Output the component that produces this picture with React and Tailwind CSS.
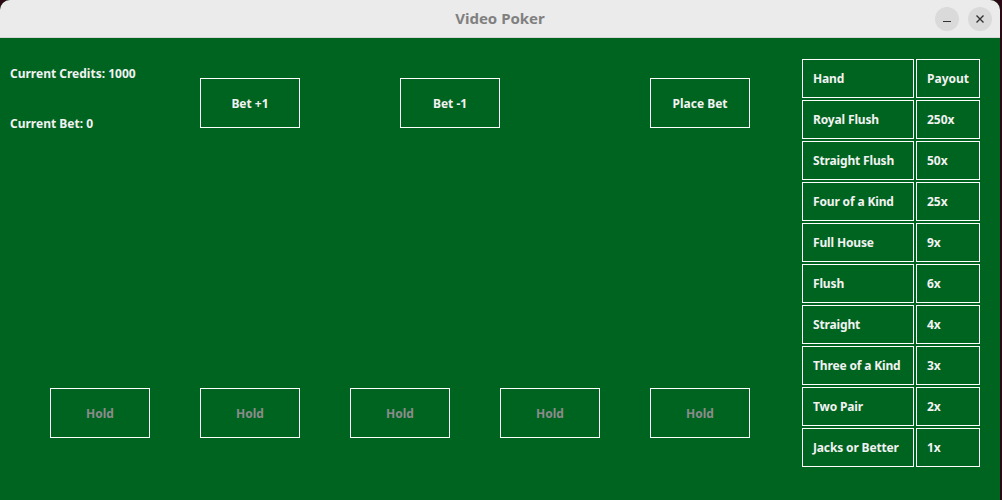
import React from "react";

const PAYOUTS = [
  ["Hand", "Payout"],
  ["Royal Flush", "250x"],
  ["Straight Flush", "50x"],
  ["Four of a Kind", "25x"],
  ["Full House", "9x"],
  ["Flush", "6x"],
  ["Straight", "4x"],
  ["Three of a Kind", "3x"],
  ["Two Pair", "2x"],
  ["Jacks or Better", "1x"],
];

const font = { fontFamily: "'Noto Sans', 'Open Sans', sans-serif" };

const Btn = ({ children, className = "", dim }) => (
  <div
    className={
      "flex h-[50px] w-[100px] shrink-0 items-center justify-center border border-white pt-[2px] text-[12px] font-bold " +
      (dim ? "text-[#8c8c8c] " : "text-[#f2f2f2] ") +
      className
    }
  >
    {children}
  </div>
);

export default function App() {
  return (
    <div className="flex h-[500px] w-[1002px] bg-[#2b0a16]" style={font}>
      <div className="flex w-[1000px] flex-col overflow-hidden rounded-t-[10px] bg-[#006421]">
        {/* title bar */}
        <div className="relative flex h-[38px] shrink-0 items-center justify-center border-b border-[#d6d6d6] bg-[#ebebeb]">
          <span className="text-[15px] font-bold text-[#808080]">Video Poker</span>
          <div className="absolute right-[8px] top-[7px] flex gap-[9px]">
            <div className="flex h-[24px] w-[24px] items-center justify-center rounded-full bg-[#dadada]">
              <div className="mt-[5px] h-[1.5px] w-[8px] bg-[#333]" />
            </div>
            <div className="flex h-[24px] w-[24px] items-center justify-center rounded-full bg-[#dadada]">
              <svg width="10" height="10" viewBox="0 0 10 10">
                <path d="M1.5 1.5 L8.5 8.5 M8.5 1.5 L1.5 8.5" stroke="#333" strokeWidth="1.4" />
              </svg>
            </div>
          </div>
        </div>

        <div className="flex flex-1">
          <div className="flex w-[802px] flex-col">
            <div className="flex items-start">
              <div className="flex w-[200px] shrink-0 flex-col pl-[10px] pt-[27px] text-[12px] font-bold leading-[18px] text-[#f2f2f2]">
                <p className="whitespace-nowrap">Current Credits: 1000</p>
                <p className="mt-[32px] whitespace-nowrap">Current Bet: 0</p>
              </div>
              <Btn className="mt-[40px]">Bet +1</Btn>
              <Btn className="ml-[100px] mt-[40px]">Bet -1</Btn>
              <Btn className="ml-[150px] mt-[40px]">Place Bet</Btn>
            </div>
            <div className="mt-[255px] flex gap-[50px] pl-[50px]">
              {[0, 1, 2, 3, 4].map((i) => (
                <Btn key={i} dim>
                  Hold
                </Btn>
              ))}
            </div>
          </div>

          {/* payout table */}
          <div className="flex flex-col gap-[2px] pt-[21px]">
            {PAYOUTS.map(([hand, pay]) => (
              <div key={hand} className="flex gap-[2px]">
                <div className="flex h-[39px] w-[112px] items-center border border-white pl-[10px] text-[12px] font-bold tracking-[-0.15px] text-[#f2f2f2]">
                  {hand}
                </div>
                <div className="flex h-[39px] w-[64px] items-center border border-white pl-[10px] text-[12px] font-bold text-[#f2f2f2]">
                  {pay}
                </div>
              </div>
            ))}
          </div>
        </div>
      </div>
    </div>
  );
}
